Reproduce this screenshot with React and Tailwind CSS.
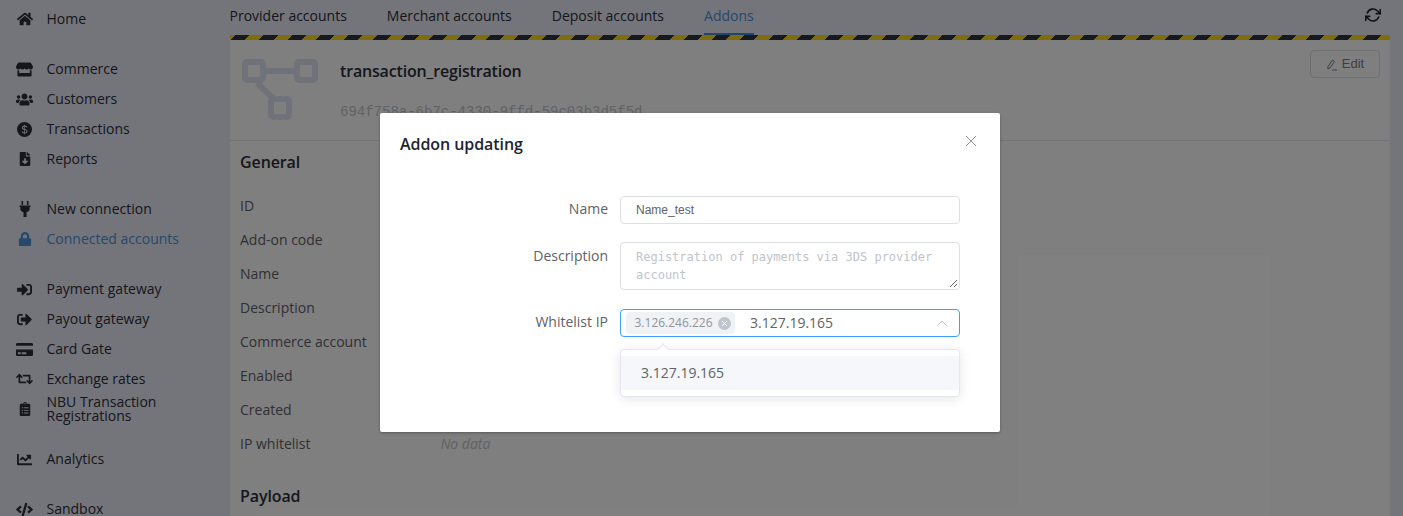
import { FaHome, FaStore, FaUsers, FaFileDownload, FaLock, FaSignInAlt, FaSignOutAlt, FaCreditCard, FaRetweet, FaClipboardList, FaChartLine, FaCode } from "react-icons/fa";
import { FiRefreshCw } from "react-icons/fi";
import { BsCurrencyDollar } from "react-icons/bs";

const DollarIcon = () => (
  <span className="flex h-[15px] w-[15px] items-center justify-center rounded-full bg-[#2c2e38] text-[#e9eaf4]">
    <BsCurrencyDollar size={11} />
  </span>
);

const PlugIcon = () => (
  <svg width="12" height="16" viewBox="0 0 12 16" fill="currentColor">
    <path d="M2.5 0h1.6v4H2.5zM7.9 0h1.6v4H7.9zM0.5 4.5h11v1.5h-0.8v1.5c0 2-1.2 3.4-3.2 3.8V16H4.5v-4.700C2.500 10.900 1.300 9.500 1.300 7.500V6H0.500z" />
  </svg>
);

// sidebar groups, spacing between groups is 20px
const menu = [
  [{ label: "Home", icon: <FaHome size={16} /> }],
  [
    { label: "Commerce", icon: <FaStore size={17} /> },
    { label: "Customers", icon: <FaUsers size={17} /> },
    { label: "Transactions", icon: <DollarIcon /> },
    { label: "Reports", icon: <FaFileDownload size={14} /> },
  ],
  [
    { label: "New connection", icon: <PlugIcon /> },
    { label: "Connected accounts", icon: <FaLock size={14} />, active: true },
  ],
  [
    { label: "Payment gateway", icon: <FaSignInAlt size={15} /> },
    { label: "Payout gateway", icon: <FaSignOutAlt size={15} /> },
    { label: "Card Gate", icon: <FaCreditCard size={17} /> },
    { label: "Exchange rates", icon: <FaRetweet size={18} /> },
    { label: "NBU Transaction Registrations", icon: <FaClipboardList size={14} /> },
  ],
  [{ label: "Analytics", icon: <FaChartLine size={15} /> }],
  [{ label: "Sandbox", icon: <FaCode size={17} /> }],
];

const tabs = ["Provider accounts", "Merchant accounts", "Deposit accounts", "Addons"];

const fields = ["ID", "Add-on code", "Name", "Description", "Commerce account", "Enabled", "Created", "IP whitelist"];

const AddonIcon = () => (
  <svg width="76" height="62" viewBox="0 0 76 62" fill="none" stroke="#dfe5f0" strokeWidth="6">
    <rect x="3" y="4" width="18" height="18" rx="2" />
    <rect x="55" y="4" width="18" height="18" rx="2" />
    <rect x="29" y="41" width="18" height="18" rx="2" />
    <path d="M21 13H55M15 25L32 41" />
  </svg>
);

const Sidebar = () => (
  <aside className="flex w-[230px] shrink-0 flex-col gap-5 pt-1 font-['Open_Sans',sans-serif] text-sm">
    {menu.map((group, i) => (
      <div key={i}>
        {group.map((item) => (
          <div
            key={item.label}
            className={`flex h-[30px] items-center ${item.active ? "text-[#4a90d9]" : "text-[#2c2e38]"}`}
          >
            <span className="ml-4 flex w-[17px] shrink-0 justify-center">{item.icon}</span>
            <span className="ml-[13.5px] w-[140px] leading-[14px]">{item.label}</span>
          </div>
        ))}
      </div>
    ))}
  </aside>
);

const Content = () => (
  <main className="min-w-0 flex-1 font-['Open_Sans',sans-serif]">
    <div className="flex h-[35px] items-start justify-between pr-[22px]">
      <div className="-ml-[0.5px] flex gap-10 text-sm text-[#2c2e38]">
        {tabs.map((tab) => (
          <div
            key={tab}
            className={`h-[35px] pt-[6px] ${tab === "Addons" ? "border-b-2 border-[#3b8ee0] text-[#4a90d9]" : ""}`}
          >
            {tab}
          </div>
        ))}
      </div>
      <FiRefreshCw size={16} strokeWidth={2.5} className="mt-[7px] text-[#22242c]" />
    </div>
    <div className="mr-[13px] h-[5px] bg-[repeating-linear-gradient(135deg,#ffd91a_0,#ffd91a_4px,#30333f_4px,#30333f_14px,#ffd91a_14px,#ffd91a_20px)]" />
    <div className="mr-[13px] h-[476px] bg-white">
      <div className="flex h-[101px] border-b border-[#e4e7ed] pt-[10px]">
        <div className="pt-[8px] pr-[22px] pl-[12px]">
          <AddonIcon />
        </div>
        <div className="flex-1">
          <div className="pt-[8px] text-base leading-[26px] font-semibold tracking-[-0.17px] text-[#2c2e38]">transaction_registration</div>
          <div className="pt-[18px] font-['Liberation_Mono',monospace] text-[14px] text-[#c0c4cc]">694f758a-6b7c-4330-9ffd-59c03b3d5f5d</div>
        </div>
        <div className="pr-[10px]">
          <button className="flex h-[28px] w-[70px] items-center justify-center gap-1 rounded border border-[#dcdfe6] font-['Liberation_Sans',sans-serif] text-[13px] text-[#7a7d85]">
            <svg width="12" height="13" viewBox="0 0 12 13" fill="none" stroke="currentColor" strokeWidth="1">
              <path d="M2 8.500L6.500 2l2 1.500-4.500 6.500-2.200 0.800zM6 12h5" />
            </svg>
            Edit
          </button>
        </div>
      </div>
      <div className="px-[10px] pt-[10px]">
        <h3 className="text-base leading-[22px] font-semibold tracking-[-0.1px] text-[#2c2e38]">General</h3>
        <div className="pt-[16px]">
          {fields.map((f) => (
            <div key={f} className="flex h-[34px] items-center text-sm text-[#5f6168]">
              <span className="w-[200.5px]">{f}</span>
              {f === "IP whitelist" && <span className="text-[#c0c4cc] italic">No data</span>}
            </div>
          ))}
        </div>
        <h3 className="pt-[24px] text-base leading-[22px] font-semibold tracking-[-0.1px] text-[#2c2e38]">Payload</h3>
      </div>
    </div>
  </main>
);

const Modal = () => (
  <div className="absolute inset-0 flex justify-center bg-black/50 pt-[113px] pr-[23px]">
    <div className="h-[319px] w-[620px] rounded-[2px] bg-white font-['Open_Sans',sans-serif] shadow-[0_1px_3px_rgba(0,0,0,0.3)]">
      <div className="flex h-[83px] items-start justify-between pt-[20px] pr-[23px] pl-5">
        <h2 className="text-base leading-[22px] font-semibold tracking-[-0.07px] text-[#22242c]">Addon updating</h2>
        <svg width="12" height="12" viewBox="0 0 12 12" stroke="#909399" strokeWidth="1" className="mt-[2px]">
          <path d="M1 1l10 10M11 1L1 11" />
        </svg>
      </div>
      <div className="flex flex-col pr-10">
        <div className="flex items-start">
          <label className="h-[28px] w-[228px] text-right text-sm leading-[26px] text-[#5f6168]">Name</label>
          <div className="ml-[12px] flex h-[28px] flex-1 items-center rounded border border-[#dcdfe6] px-[15px] font-['Liberation_Sans',sans-serif] text-xs text-[#606266]">
            Name_test
          </div>
        </div>
        <div className="mt-[18px] flex items-start">
          <label className="w-[228px] pt-[1px] text-right text-sm leading-[26px] text-[#5f6168]">Description</label>
          <div className="relative ml-[12px] h-[48px] flex-1 rounded border border-[#dcdfe6] px-[15px] pt-[5px] font-['DejaVu_Sans_Mono',monospace] text-xs leading-[18px] text-[#c0c4cc]">
            Registration of payments via 3DS provider account
            <svg width="9" height="9" viewBox="0 0 9 9" stroke="#606266" strokeWidth="1" className="absolute right-[1px] bottom-[1px]">
              <path d="M1 8l7-7M5 8l3-3" />
            </svg>
          </div>
        </div>
        <div className="mt-[19px] flex items-start">
          <label className="w-[228px] text-right text-sm leading-[26px] text-[#5f6168]">Whitelist IP</label>
          <div className="relative ml-[12px] flex-1">
            <div className="flex h-[28px] items-center rounded border border-[#409eff] pl-[5px] text-sm text-[#606266]">
              <span className="flex h-[22px] w-[109px] items-center justify-between rounded bg-[#f0f2f5] pr-[4px] pl-[8.5px] text-xs text-[#909399]">
                3.126.246.226
                <span className="flex h-[13px] w-[13px] items-center justify-center rounded-full bg-[#c0c4cc]">
                  <svg width="7" height="7" viewBox="0 0 7 7" stroke="#fff" strokeWidth="1">
                    <path d="M1 1l5 5M6 1L1 6" />
                  </svg>
                </span>
              </span>
              <span className="ml-[15px] flex-1">3.127.19.165</span>
              <svg width="12" height="7" viewBox="0 0 12 7" fill="none" stroke="#c0c4cc" strokeWidth="1" className="mr-[11px]">
                <path d="M1 6l5-5 5 5" />
              </svg>
            </div>
            {/* dropdown sits over the modal */}
            <div className="absolute top-[40px] right-0 left-0 h-[48px] rounded border border-[#e4e7ed] bg-white py-[6px] shadow-[0_2px_12px_rgba(0,0,0,0.1)]">
              <div className="absolute -top-[5px] left-[38px] h-[8px] w-[8px] rotate-45 border-t border-l border-[#e4e7ed] bg-white" />
              <div className="relative flex h-[34px] items-center bg-[#f5f7fa] px-5 text-sm text-[#606266]">3.127.19.165</div>
            </div>
          </div>
        </div>
      </div>
    </div>
  </div>
);

export default function App() {
  return (
    <div className="relative flex h-[516px] w-[1403px] overflow-hidden bg-[#e9eaf4]">
      <Sidebar />
      <Content />
      <Modal />
    </div>
  );
}
